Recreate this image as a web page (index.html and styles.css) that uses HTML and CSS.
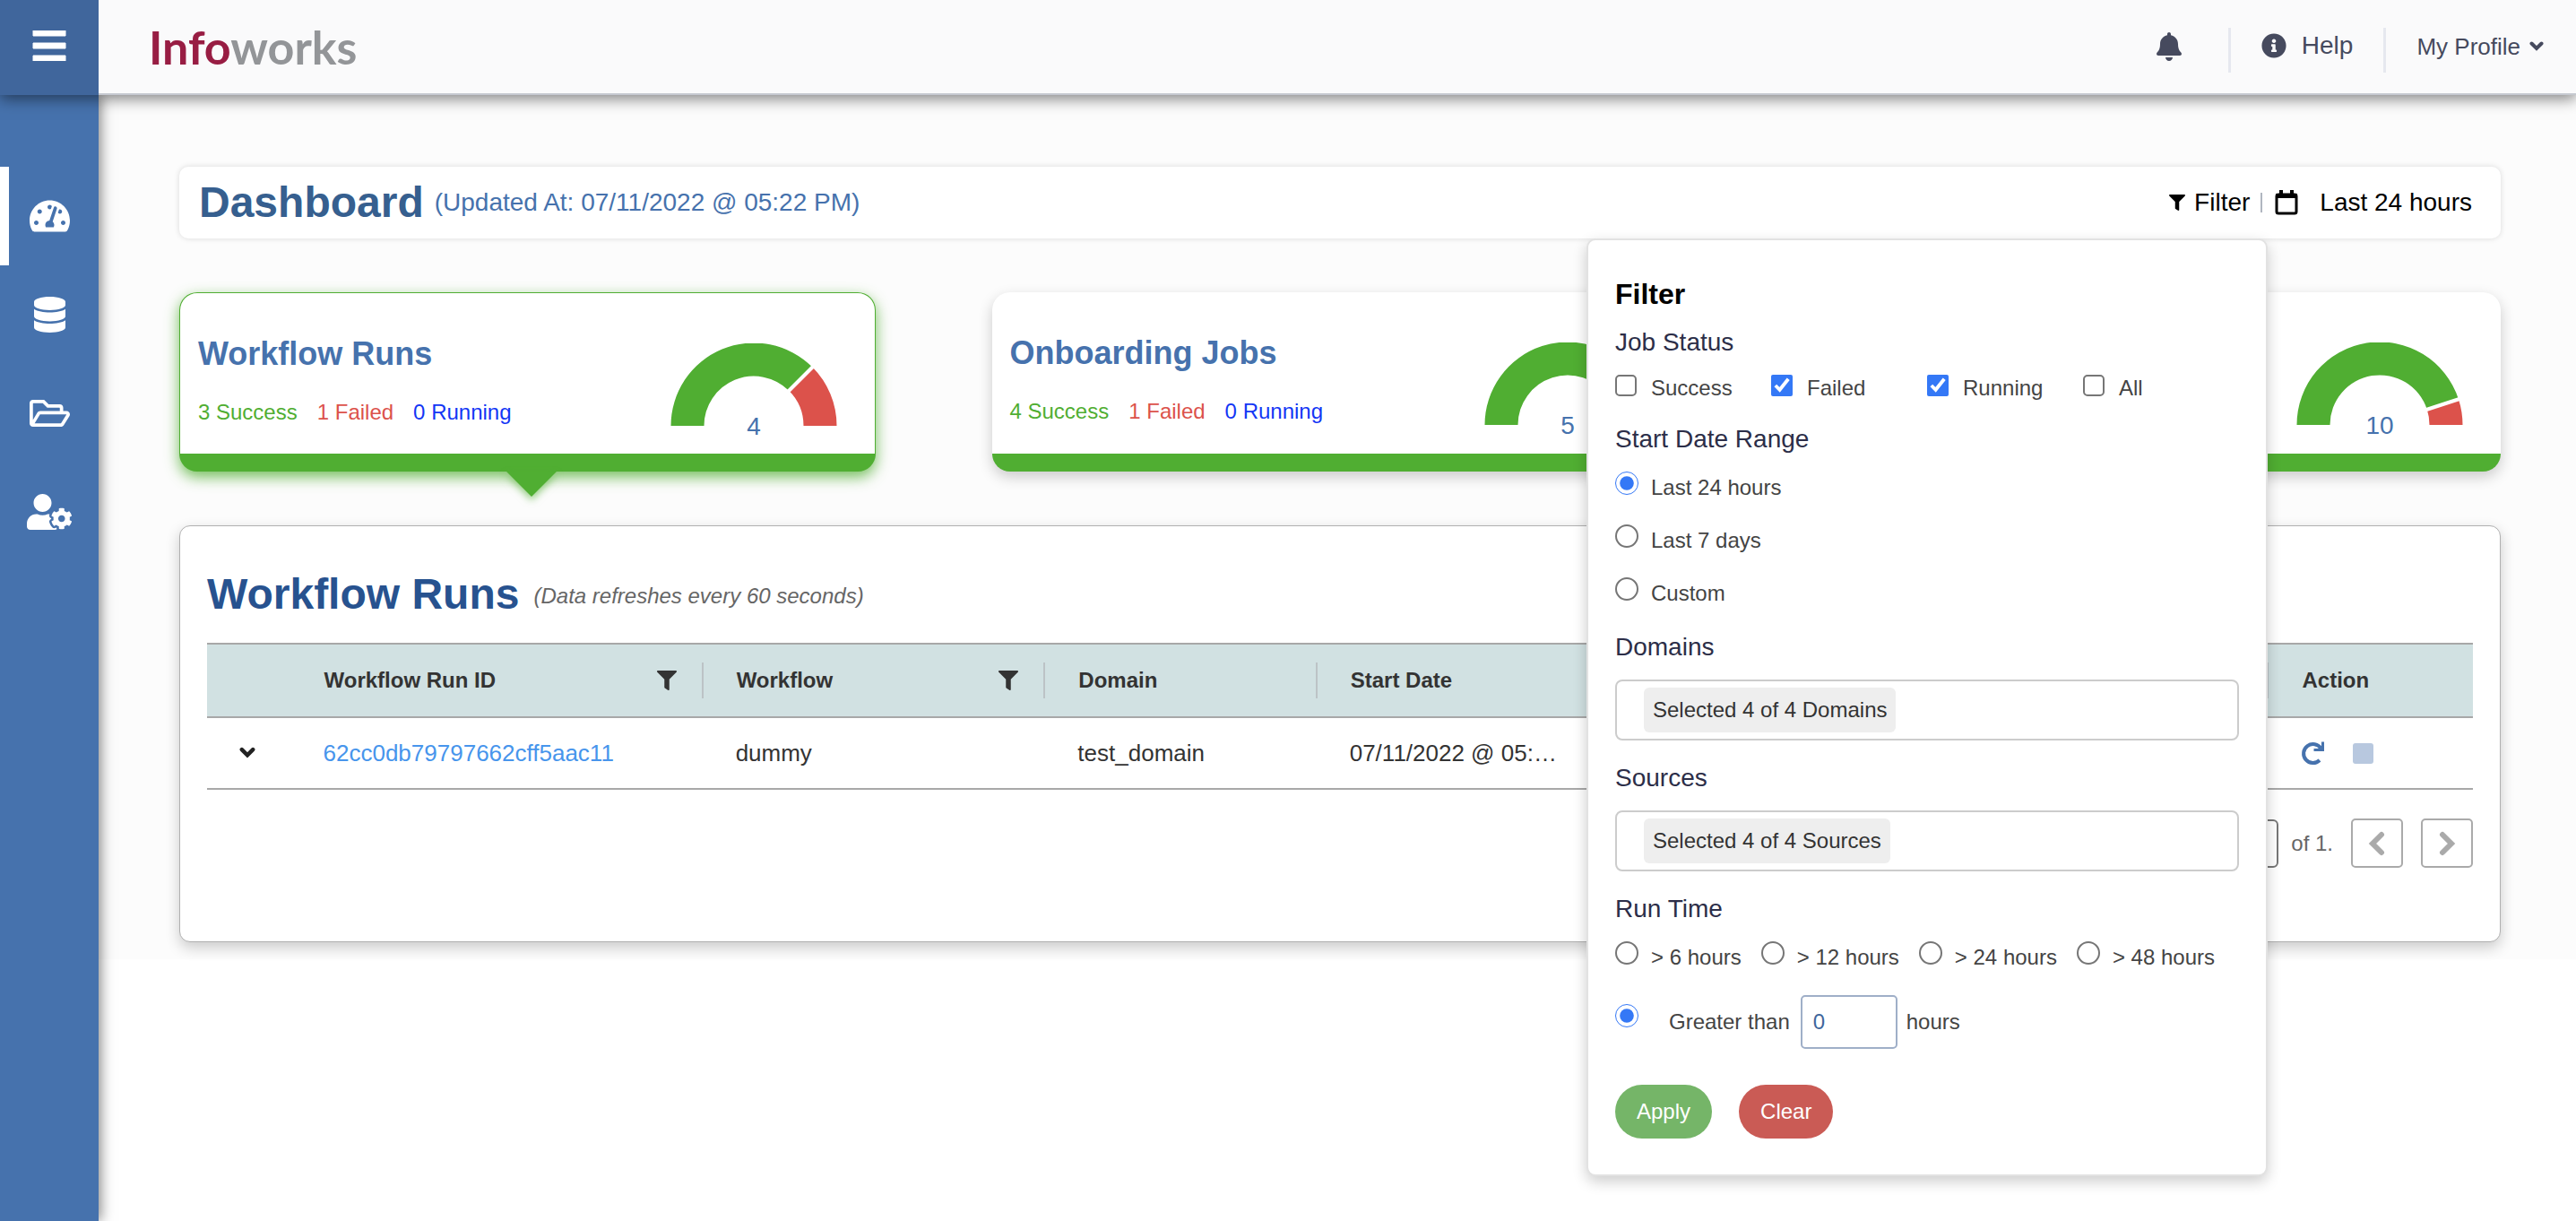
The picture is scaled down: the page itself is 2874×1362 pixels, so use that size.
FILE: index.html
```html
<!DOCTYPE html>
<html lang="en">
<head>
    <meta charset="UTF-8">
    <meta name="viewport" content="width=device-width, initial-scale=1.0">
    <title>Infoworks - Dashboard</title>
    <link rel="stylesheet" href="styles.css">
</head>
<body>
    <!-- shared icons -->
    <svg class="sprite" aria-hidden="true">
        <symbol id="icon-filter" viewBox="0 0 512 512"><path d="M487.976 0H24.028C2.71 0-8.047 25.866 7.058 40.971L192 225.941V432c0 7.831 3.821 15.17 10.237 19.662l80 55.98C298.02 518.69 320 507.493 320 487.98V225.941l184.947-184.97C520.021 25.896 509.338 0 487.976 0z"/></symbol>
        <symbol id="icon-chevron" viewBox="0 0 16 12"><path d="M2.5 2.5L8 8L13.5 2.5" fill="none" stroke="currentColor" stroke-width="4" stroke-linecap="round"/></symbol>
    </svg>

    <header class="topbar">
        <button type="button" class="menu-toggle" aria-label="Menu">
            <svg width="38" height="34" viewBox="0 0 38 34"><path d="M1 0h36v6H1zM1 14h36v6H1zM1 28h36v6H1z" stroke="#fff" stroke-width="1" stroke-linejoin="round" fill="#fff"/></svg>
        </button>
        <div class="topbar-main">
            <a href="#" class="logo"><span>Info</span>works</a>
            <nav class="topbar-links">
                <button type="button" class="bell" aria-label="Notifications">
                    <svg width="28" height="32" viewBox="0 0 448 512"><path d="M224 512c35.32 0 63.97-28.65 63.97-64H160.03c0 35.35 28.65 64 63.97 64zm215.39-149.71c-19.32-20.76-55.47-51.99-55.47-154.29 0-77.7-54.48-139.9-127.94-155.16V32c0-17.67-14.32-32-31.98-32s-31.98 14.33-31.98 32v20.84C118.56 68.1 64.08 130.3 64.08 208c0 102.3-36.15 133.53-55.47 154.29-6 6.45-8.66 14.16-8.61 21.71.11 16.4 12.98 32 32.1 32h383.8c19.12 0 32-15.6 32.1-32 .05-7.55-2.61-15.27-8.61-21.71z"/></svg>
                </button>
                <a href="#" class="help">
                    <svg width="28" height="28" viewBox="0 0 512 512"><path d="M256 8C119.043 8 8 119.083 8 256c0 136.997 111.043 248 248 248s248-111.003 248-248C504 119.083 392.957 8 256 8zm0 110c23.196 0 42 18.804 42 42s-18.804 42-42 42-42-18.804-42-42 18.804-42 42-42zm56 254c0 6.627-5.373 12-12 12h-88c-6.627 0-12-5.373-12-12v-24c0-6.627 5.373-12 12-12h12v-64h-12c-6.627 0-12-5.373-12-12v-24c0-6.627 5.373-12 12-12h64c6.627 0 12 5.373 12 12v100h12c6.627 0 12 5.373 12 12v24z"/></svg>
                    Help
                </a>
                <button type="button" class="profile">
                    My Profile
                    <svg width="16" height="12"><use href="#icon-chevron"/></svg>
                </button>
            </nav>
        </div>
    </header>

    <div class="layout">
        <nav class="sidebar">
            <a href="#" class="active" aria-label="Dashboard">
                <svg width="45" height="40" viewBox="0 0 576 512"><path d="M288 32C128.94 32 0 160.94 0 320c0 52.8 14.25 102.26 39.06 144.8 5.61 9.62 16.3 15.2 27.44 15.2h443c11.14 0 21.83-5.58 27.44-15.2C561.75 422.26 576 372.8 576 320c0-159.06-128.94-288-288-288zm0 64c14.71 0 26.58 10.13 30.32 23.65-1.11 2.26-2.64 4.23-3.45 6.67l-9.22 27.67c-5.13 3.49-10.97 6.01-17.64 6.01-17.67 0-32-14.33-32-32S270.33 96 288 96zM96 384c-17.67 0-32-14.33-32-32s14.33-32 32-32 32 14.33 32 32-14.33 32-32 32zm48-160c-17.67 0-32-14.33-32-32s14.33-32 32-32 32 14.33 32 32-14.33 32-32 32zm246.77-72.41l-61.33 184C343.13 347.33 352 364.54 352 384c0 11.72-3.38 22.55-8.88 32H232.88c-5.5-9.45-8.88-20.28-8.88-32 0-33.94 26.5-61.43 59.9-63.59l61.34-184.01c4.17-12.56 17.73-19.45 30.36-15.17 12.57 4.19 19.35 17.79 15.17 30.36zm14.66 57.2l15.52-46.55c3.47-1.29 7.13-2.23 11.05-2.23 17.67 0 32 14.33 32 32s-14.33 32-32 32c-11.38-.01-20.89-6.28-26.57-15.22zM480 384c-17.67 0-32-14.33-32-32s14.33-32 32-32 32 14.33 32 32-14.33 32-32 32z"/></svg>
            </a>
            <a href="#" aria-label="Data">
                <svg width="35" height="40" viewBox="0 0 448 512"><path d="M448 73.143v45.714C448 159.143 347.667 192 224 192S0 159.143 0 118.857V73.143C0 32.857 100.333 0 224 0s224 32.857 224 73.143zM448 176v102.857C448 319.143 347.667 352 224 352S0 319.143 0 278.857V176c48.125 33.143 136.208 48.572 224 48.572S399.874 209.143 448 176zm0 160v102.857C448 479.143 347.667 512 224 512S0 479.143 0 438.857V336c48.125 33.143 136.208 48.572 224 48.572S399.874 369.143 448 336z"/></svg>
            </a>
            <a href="#" aria-label="Domains">
                <svg width="45" height="40" viewBox="0 0 576 512"><path d="M527.9 224H480v-48c0-26.5-21.5-48-48-48H272l-64-64H48C21.5 64 0 85.5 0 112v288c0 26.5 21.5 48 48 48h400c16.5 0 31.9-8.5 40.7-22.6l79.9-128c20-31.9-3-73.4-40.7-73.4zM48 118c0-3.3 2.7-6 6-6h134.1l64 64H426c3.3 0 6 2.7 6 6v42H152c-16.8 0-32.4 8.8-41.1 23.2L48 351.4zm400 282H72l77.2-128H528z"/></svg>
            </a>
            <a href="#" aria-label="Admin">
                <svg width="50" height="40" viewBox="0 0 640 512"><path d="M610.5 373.3c2.6-14.1 2.6-28.5 0-42.6l25.8-14.9c3-1.7 4.3-5.2 3.3-8.5-6.7-21.6-18.2-41.2-33.2-57.4-2.3-2.5-6-3.1-9-1.4l-25.8 14.9c-10.9-9.3-23.4-16.5-36.9-21.3v-29.8c0-3.4-2.4-6.4-5.7-7.1-22.3-5-45-4.8-66.2 0-3.3.7-5.7 3.7-5.7 7.1v29.8c-13.5 4.8-26 12-36.9 21.3l-25.8-14.9c-2.9-1.7-6.7-1.1-9 1.4-15 16.2-26.5 35.8-33.2 57.4-1 3.3.4 6.8 3.3 8.5l25.8 14.9c-2.6 14.1-2.6 28.5 0 42.6l-25.8 14.9c-3 1.7-4.3 5.2-3.3 8.5 6.7 21.6 18.2 41.1 33.2 57.4 2.3 2.5 6 3.1 9 1.4l25.8-14.9c10.9 9.3 23.4 16.5 36.9 21.3v29.8c0 3.4 2.4 6.4 5.7 7.1 22.3 5 45 4.8 66.2 0 3.3-.7 5.7-3.7 5.7-7.1v-29.8c13.5-4.8 26-12 36.9-21.3l25.8 14.9c2.9 1.7 6.7 1.1 9-1.4 15-16.2 26.5-35.8 33.2-57.4 1-3.3-.4-6.8-3.3-8.5l-25.8-14.9zM496 400.5c-26.8 0-48.5-21.8-48.5-48.5s21.8-48.5 48.5-48.5 48.5 21.8 48.5 48.5-21.7 48.5-48.5 48.5zM224 256c70.7 0 128-57.3 128-128S294.7 0 224 0 96 57.3 96 128s57.3 128 128 128zm201.2 226.5c-2.3-1.2-4.6-2.6-6.8-3.9l-7.9 4.6c-6 3.4-12.8 5.3-19.6 5.3-10.9 0-21.4-4.6-28.9-12.6-18.3-19.8-32.3-43.9-40.2-69.6-5.5-17.7 1.9-36.4 17.9-45.7l7.9-4.6c-.1-2.6-.1-5.2 0-7.8l-7.9-4.6c-16-9.2-23.4-28-17.9-45.7.9-2.9 2.2-5.8 3.2-8.7-3.8-.3-7.5-1.2-11.4-1.2h-16.7c-22.2 10.2-46.9 16-72.9 16s-50.6-5.8-72.9-16h-16.7C60.2 288 0 348.2 0 422.4V464c0 26.5 21.5 48 48 48h352c10.1 0 19.5-3.2 27.2-8.5-1.2-3.8-2-7.7-2-11.8v-9.2z"/></svg>
            </a>
        </nav>

        <main class="content">
            <div class="title-bar">
                <h1>Dashboard</h1>
                <span class="updated">(Updated At: 07/11/2022 @ 05:22 PM)</span>
                <div class="title-actions">
                    <button type="button" class="filter-toggle">
                        <svg width="18" height="18"><use href="#icon-filter"/></svg>
                        Filter
                    </button>
                    <button type="button" class="range">
                        <svg width="26" height="28" viewBox="0 0 26 28"><rect x="2" y="5" width="22" height="21" rx="2" fill="none" stroke="#000" stroke-width="3"/><path d="M1 4h24v5H1z"/><path d="M7 0v5M19 0v5" stroke="#000" stroke-width="4"/></svg>
                        Last 24 hours
                    </button>
                </div>

                <form class="filter-panel">
                    <h2>Filter</h2>
                    <h3>Job Status</h3>
                    <div class="checks">
                        <label><input type="checkbox" name="success">Success</label>
                        <label><input type="checkbox" name="failed" checked>Failed</label>
                        <label><input type="checkbox" name="running" checked>Running</label>
                        <label><input type="checkbox" name="all">All</label>
                    </div>
                    <h3>Start Date Range</h3>
                    <div class="radios">
                        <label><input type="radio" name="range" checked>Last 24 hours</label>
                        <label><input type="radio" name="range">Last 7 days</label>
                        <label><input type="radio" name="range">Custom</label>
                    </div>
                    <h3 id="domainsLabel">Domains</h3>
                    <button type="button" class="multi-select" aria-describedby="domainsLabel"><span>Selected 4 of 4 Domains</span></button>
                    <h3 id="sourcesLabel">Sources</h3>
                    <button type="button" class="multi-select" aria-describedby="sourcesLabel"><span>Selected 4 of 4 Sources</span></button>
                    <h3>Run Time</h3>
                    <div class="radios run-time">
                        <label><input type="radio" name="runtime">&gt; 6 hours</label>
                        <label><input type="radio" name="runtime">&gt; 12 hours</label>
                        <label><input type="radio" name="runtime">&gt; 24 hours</label>
                        <label><input type="radio" name="runtime">&gt; 48 hours</label>
                    </div>
                    <div class="greater">
                        <input type="radio" name="runtime" id="greaterThan" checked>
                        <label for="greaterThan">Greater than</label>
                        <input type="text" id="hours" value="0">
                        <label for="hours">hours</label>
                    </div>
                    <div class="buttons">
                        <button type="button" class="apply">Apply</button>
                        <button type="button" class="clear">Clear</button>
                    </div>
                </form>
            </div>

            <div class="cards">
                <section class="card selected">
                    <div>
                        <h2>Workflow Runs</h2>
                        <p class="stats"><span class="success">3 Success</span><span class="failed">1 Failed</span><span class="running">0 Running</span></p>
                    </div>
                    <svg class="gauge" width="186" height="116" viewBox="0 0 186 116">
                        <path class="ok" d="M.5 92A92.5 92.5 0 0 1 158.4 26.6L132.2 52.8A55.5 55.5 0 0 0 37.5 92z"/>
                        <path class="bad" d="M158.4 26.6A92.5 92.5 0 0 1 185.5 92H148.5A55.5 55.5 0 0 0 132.2 52.8z"/>
                        <path class="split" d="M130 55L162 23"/>
                        <text x="93" y="102">4</text>
                    </svg>
                </section>
                <section class="card">
                    <div>
                        <h2>Onboarding Jobs</h2>
                        <p class="stats"><span class="success">4 Success</span><span class="failed">1 Failed</span><span class="running">0 Running</span></p>
                    </div>
                    <svg class="gauge" width="186" height="116" viewBox="0 0 186 116">
                        <path class="ok" d="M.5 92A92.5 92.5 0 0 1 167.8 37.6L137.9 59.4A55.5 55.5 0 0 0 37.5 92z"/>
                        <path class="bad" d="M167.8 37.6A92.5 92.5 0 0 1 185.5 92H148.5A55.5 55.5 0 0 0 137.9 59.4z"/>
                        <path class="split" d="M135 61.5L171 35.3"/>
                        <text x="93" y="102">5</text>
                    </svg>
                </section>
                <section class="card">
                    <div></div>
                    <svg class="gauge" width="186" height="116" viewBox="0 0 186 116">
                        <path class="ok" d="M.5 92A92.5 92.5 0 0 1 181 63.4L145.8 74.8A55.5 55.5 0 0 0 37.5 92z"/>
                        <path class="bad" d="M181 63.4A92.5 92.5 0 0 1 185.5 92H148.5A55.5 55.5 0 0 0 145.8 74.8z"/>
                        <path class="split" d="M142 76L185 62"/>
                        <text x="93" y="102">10</text>
                    </svg>
                </section>
            </div>

            <section class="runs">
                <div class="runs-title">
                    <h2>Workflow Runs</h2>
                    <em>(Data refreshes every 60 seconds)</em>
                </div>
                <table>
                    <colgroup>
                        <col class="col-toggle">
                        <col class="col-id">
                        <col class="col-workflow">
                        <col class="col-domain">
                        <col class="col-date">
                        <col class="col-rest">
                        <col>
                    </colgroup>
                    <thead>
                        <tr>
                            <th class="no-line"></th>
                            <th><div>Workflow Run ID <svg width="22" height="22"><use href="#icon-filter"/></svg></div></th>
                            <th><div>Workflow <svg width="22" height="22"><use href="#icon-filter"/></svg></div></th>
                            <th>Domain</th>
                            <th>Start Date</th>
                            <th></th>
                            <th class="no-line">Action</th>
                        </tr>
                    </thead>
                    <tbody>
                        <tr>
                            <td class="toggle"><button type="button" aria-label="Expand"><svg width="18" height="14"><use href="#icon-chevron"/></svg></button></td>
                            <td><a href="#">62cc0db79797662cff5aac11</a></td>
                            <td>dummy</td>
                            <td>test_domain</td>
                            <td>07/11/2022 @ 05:22 PM</td>
                            <td></td>
                            <td>
                                <div class="actions">
                                    <button type="button" aria-label="Restart"><svg width="28" height="28" viewBox="0 0 28 28"><path d="M21 22A10.500 10.500 0 1 1 22.500 9" fill="none" stroke="#4672ad" stroke-width="4"/><path d="M14.500 10.500H24.500V1.500" fill="none" stroke="#4672ad" stroke-width="3"/></svg></button>
                                    <button type="button" aria-label="Stop" class="stop"></button>
                                </div>
                            </td>
                        </tr>
                    </tbody>
                </table>
                <div class="pager">
                    <input type="text" value="" aria-label="Page">
                    <span>of 1.</span>
                    <button type="button" aria-label="Previous"><svg width="20" height="28" viewBox="0 0 20 28"><path d="M15 4L5 14L15 24" fill="none" stroke="#aaa" stroke-width="6" stroke-linecap="round"/></svg></button>
                    <button type="button" aria-label="Next"><svg width="20" height="28" viewBox="0 0 20 28"><path d="M5 4L15 14L5 24" fill="none" stroke="#aaa" stroke-width="6" stroke-linecap="round"/></svg></button>
                </div>
            </section>
        </main>
    </div>
</body>
</html>
```
FILE: styles.css
```css
* {
    box-sizing: border-box;
}
body {
    margin: 0;
    background: #fff;
    font-family: "Liberation Sans", Arial, sans-serif;
    font-size: 24px;
    line-height: 30px;
    color: #333;
}
h1, h2, h3, p {
    margin: 0;
}
a {
    color: inherit;
    text-decoration: none;
}
button {
    padding: 0;
    border: none;
    background: none;
    font: inherit;
    color: inherit;
    cursor: pointer;
}
svg {
    display: block;
    flex: none;
    fill: currentColor;
}
.sprite {
    position: absolute;
    width: 0;
    height: 0;
}

/* top bar */
.topbar {
    position: relative;
    z-index: 3;
    display: flex;
    height: 106px;
    box-shadow: 0 4px 16px rgba(0,0,0,0.5);
}
.menu-toggle {
    display: flex;
    align-items: center;
    justify-content: center;
    width: 110px;
    padding-bottom: 4px;
    background: #40669c;
}
.topbar-main {
    flex: 1;
    display: flex;
    justify-content: space-between;
    align-items: center;
    padding: 0 36px 0 56px;
    background: #fafafb;
    border-bottom: 2px solid #c6c9d0;
}
.logo {
    font-family: Lato, sans-serif;
    font-size: 52px;
    line-height: 64px;
    font-weight: bold;
    color: #939598;
}
.logo span {
    color: #981d43;
}
.topbar-links {
    display: flex;
    align-items: center;
    color: #464a5e;
}
.bell {
    padding-right: 52px;
}
.help {
    display: flex;
    align-items: center;
    gap: 17px;
    height: 50px;
    padding: 0 34px;
    margin-top: 8px;
    border: solid #e6e8ef;
    border-width: 0 3px;
    padding-bottom: 10px;
    font-size: 28px;
}
.profile {
    display: flex;
    align-items: center;
    gap: 10px;
    padding-left: 34px;
    font-size: 26px;
}

/* side bar */
.layout {
    display: flex;
    align-items: flex-start;
}
.sidebar {
    position: relative;
    z-index: 2;
    flex: none;
    width: 110px;
    min-height: calc(100vh - 106px);
    padding-top: 80px;
    background: #4672ad;
    color: #fff;
    box-shadow: 2px 0 14px rgba(0,0,0,0.5);
}
.sidebar a {
    display: flex;
    align-items: center;
    justify-content: center;
    height: 110px;
}
.sidebar .active {
    border-left: 10px solid #fff;
    padding-right: 10px;
}

/* title bar */
.content {
    flex: 1;
    min-width: 0;
    padding: 80px 84px 19px 90px;
    background: #fcfcfc;
}
.title-bar {
    position: relative;
    z-index: 1;
    display: flex;
    align-items: center;
    height: 80px;
    padding: 0 32px 0 22px;
    margin-bottom: 60px;
    background: #fff;
    border-radius: 10px;
    box-shadow: 0 0 6px rgba(0,0,0,0.14);
}
h1 {
    font-size: 48px;
    line-height: 56px;
    color: #365f8f;
}
.updated {
    margin-left: 12px;
    font-size: 28px;
    color: #4672ad;
}
.title-actions {
    display: flex;
    align-items: center;
    margin-left: auto;
    font-size: 28px;
    color: #000;
}
.title-actions button {
    display: flex;
    align-items: center;
}
.filter-toggle {
    gap: 10px;
}
.range {
    gap: 24px;
}
.range::before {
    content: "";
    width: 2px;
    height: 22px;
    margin: 0 -10px 0 12px;
    background: #b0b6c0;
}

/* filter pop-up */
.filter-panel {
    position: absolute;
    top: 100%;
    right: 260px;
    width: 760px;
    padding: 40px 30px;
    background: #fff;
    border: 2px solid #e2e2e2;
    border-radius: 10px;
    box-shadow: 0 6px 16px rgba(0,0,0,0.2);
    color: #444;
}
.filter-panel h2 {
    margin-bottom: 16px;
    font-size: 32px;
    line-height: 40px;
    color: #000;
}
.filter-panel h3 {
    margin-bottom: 18px;
    font-size: 28px;
    font-weight: normal;
    line-height: 36px;
    color: #2c2e48;
}
.filter-panel input[type="checkbox"],
.filter-panel input[type="radio"] {
    flex: none;
    width: 26px;
    height: 26px;
    margin: 0;
    accent-color: #3478f6;
}
.filter-panel input[type="checkbox"] {
    width: 24px;
    height: 24px;
}
.filter-panel input[type="checkbox"]:not(:checked),
.filter-panel input[type="radio"]:not(:checked) {
    appearance: none;
    background: #fff;
    border: 2px solid #767676;
    border-radius: 50%;
}
.filter-panel input[type="checkbox"]:not(:checked) {
    border-radius: 5px;
}
.checks, .radios {
    margin-bottom: 24px;
}
.checks {
    display: grid;
    grid-template-columns: repeat(4, 25%);
}
.checks label, .radios label {
    display: flex;
    align-items: flex-start;
    gap: 14px;
}
.checks label {
    gap: 16px;
}
.radios {
    display: flex;
    flex-direction: column;
    gap: 23px;
    line-height: 36px;
}
.run-time {
    flex-direction: row;
    gap: 22px;
    white-space: nowrap;
}
.multi-select {
    display: block;
    width: 100%;
    height: 68px;
    padding: 7px 30px 9px;
    margin-bottom: 24px;
    border: 2px solid #ccc;
    border-radius: 8px;
    text-align: left;
}
.multi-select span {
    display: inline-block;
    padding: 0 10px;
    line-height: 50px;
    background: #eee;
    border-radius: 6px;
    color: #333;
}
.greater {
    display: flex;
    align-items: center;
    margin-bottom: 40px;
}
.greater input[type="radio"] {
    align-self: flex-start;
    margin: 10px 34px 0 0;
}
.greater input[type="text"] {
    width: 108px;
    height: 60px;
    padding: 0 12px;
    margin: 0 10px 0 12px;
    border: 2px solid #9fafc8;
    border-radius: 5px;
    font: inherit;
    color: #40669c;
}
.buttons {
    display: flex;
    gap: 30px;
}
.buttons button {
    height: 60px;
    padding: 0 24px;
    border-radius: 30px;
    color: #fff;
}
.apply {
    background: #75b568;
}
.clear {
    background: #ca5b55;
}

/* summary cards */
.cards {
    display: flex;
    justify-content: space-between;
    margin-bottom: 60px;
}
.card {
    position: relative;
    display: flex;
    justify-content: space-between;
    align-items: flex-start;
    width: 30%;
    height: 200px;
    padding: 46px 42px 0 20px;
    background: #fff;
    border-bottom: 20px solid #50ae32;
    border-radius: 20px;
    box-shadow: 0 6px 16px rgba(0,0,0,0.2);
}
.card h2 {
    margin-bottom: 28px;
    font-size: 36px;
    line-height: 44px;
    color: #4672ad;
}
.stats {
    display: flex;
    gap: 22px;
}
.success {
    color: #50ae32;
}
.failed {
    color: #dc524b;
}
.running {
    color: #1336f5;
}
.gauge {
    margin-top: 10px;
}
.gauge .ok {
    fill: #50ae32;
}
.gauge .bad {
    fill: #dc524b;
}
.gauge .split {
    stroke: #fff;
    stroke-width: 4;
}
.gauge text {
    font-size: 28px;
    text-anchor: middle;
    fill: #4672ad;
}
.card.selected {
    border: 1px solid #50ae32;
    border-bottom-width: 20px;
    box-shadow: 0 6px 16px rgba(80,174,50,0.8);
}
.card.selected::after {
    content: "";
    position: absolute;
    top: 100%;
    left: 47%;
    margin-top: 20px;
    border: 28px solid transparent;
    border-top-color: #50ae32;
    border-bottom: none;
    filter: drop-shadow(0 4px 4px rgba(80,174,50,0.6));
}

/* runs table */
.runs {
    padding: 48px 30px 82px;
    background: #fff;
    border: 1px solid #b0b0b0;
    border-radius: 12px;
    box-shadow: 0 6px 16px rgba(0,0,0,0.2);
}
.runs-title {
    display: flex;
    align-items: center;
    gap: 16px;
    margin-bottom: 26px;
}
.runs-title h2 {
    font-size: 48px;
    line-height: 56px;
    color: #27528f;
}
.runs-title em {
    padding-top: 4px;
    color: #666;
}
table {
    width: 100%;
    table-layout: fixed;
    border-collapse: separate;
    border-spacing: 0;
}
.col-toggle {
    width: 3.7%;
}
.col-id {
    width: 18.2%;
}
.col-workflow {
    width: 15.1%;
}
.col-domain {
    width: 12%;
}
.col-date {
    width: 12.2%;
}
.col-rest {
    width: 29.8%;
}
th {
    height: 84px;
    padding: 0 30px 0 37px;
    background: #d1e1e2 linear-gradient(#bcc3c6, #bcc3c6) no-repeat right center / 2px 40px;
    border: solid #a8a8a8;
    border-width: 2px 0;
    text-align: left;
}
th.no-line {
    background-image: none;
}
th div {
    display: flex;
    align-items: center;
    justify-content: space-between;
}
td {
    height: 80px;
    padding: 0 36px;
    border-bottom: 2px solid #a8a8a8;
    font-size: 26px;
    overflow: hidden;
    text-overflow: ellipsis;
    white-space: nowrap;
}
td a {
    color: #4795ec;
}
.toggle button {
    display: block;
    color: #222;
}
.actions {
    display: flex;
    align-items: center;
    gap: 30px;
}
.stop {
    width: 23px;
    height: 23px;
    background: #b8c8df;
    border-radius: 3px;
}
.pager {
    display: flex;
    justify-content: flex-end;
    align-items: center;
    margin-top: 32px;
    color: #666;
}
.pager input {
    width: 80px;
    height: 54px;
    border: 2px solid #777;
    border-radius: 6px;
}
.pager span {
    margin: 0 20px 0 14px;
}
.pager button {
    display: flex;
    align-items: center;
    justify-content: center;
    width: 58px;
    height: 55px;
    border: 2px solid #aaa;
    border-radius: 5px;
}
.pager button + button {
    margin-left: 20px;
}
```
